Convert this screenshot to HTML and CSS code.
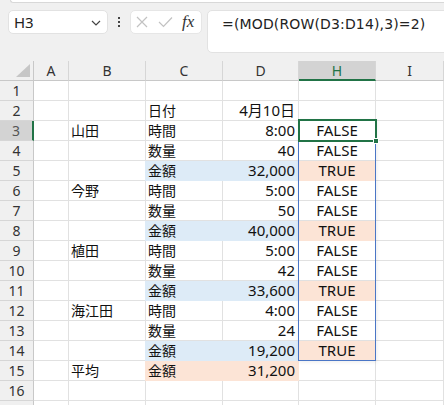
FILE: index.html
```html
<!DOCTYPE html>
<html lang="ja">
<head>
<meta charset="utf-8">
<link rel="stylesheet" href="styles.css">
</head>
<body>
<div class="ribbon-edge"></div>
<div class="fbar">
  <div class="namebox">
    <span>H3</span>
    <svg class="chev" width="10" height="6" viewBox="0 0 10 6"><polyline points="1,1 5,5 9,1" fill="none" stroke="#444" stroke-width="1.2"/></svg>
  </div>
  <div class="vdots"><i></i><i></i><i></i></div>
  <div class="fxbox">
    <svg width="12" height="12" viewBox="0 0 12 12"><path d="M1 1 L11 11 M11 1 L1 11" stroke="#c2c2c2" stroke-width="1.2" fill="none"/></svg>
    <svg width="15" height="12" viewBox="0 0 15 12"><polyline points="1,6 5.5,10.5 14,1.5" stroke="#c2c2c2" stroke-width="1.2" fill="none"/></svg>
    <span class="fx">fx</span>
  </div>
  <div class="formula">=(MOD(ROW(D3:D14),3)=2)</div>
</div>
<div class="sheet">
  <div class="grid">
    <div class="c hd corner"><svg width="15" height="14" viewBox="0 0 15 14"><polygon points="14,0 14,13 0,13" fill="#c6c6c6"/></svg></div>
    <div class="c hd">A</div><div class="c hd">B</div><div class="c hd">C</div><div class="c hd">D</div><div class="c hd hsel">H</div><div class="c hd">I</div>

    <div class="c rh">1</div><div class="c"></div><div class="c"></div><div class="c"></div><div class="c"></div><div class="c"></div><div class="c"></div>
    <div class="c rh">2</div><div class="c"></div><div class="c"></div><div class="c jp">日付</div><div class="c r">4月10日</div><div class="c"></div><div class="c"></div>
    <div class="c rh rsel">3</div><div class="c"></div><div class="c jp">山田</div><div class="c jp">時間</div><div class="c r">8:00</div><div class="c m">FALSE</div><div class="c"></div>
    <div class="c rh">4</div><div class="c"></div><div class="c"></div><div class="c jp">数量</div><div class="c r">40</div><div class="c m">FALSE</div><div class="c"></div>
    <div class="c rh">5</div><div class="c"></div><div class="c"></div><div class="c jp blue bl">金額</div><div class="c r blue">32,000</div><div class="c m org">TRUE</div><div class="c"></div>
    <div class="c rh">6</div><div class="c"></div><div class="c jp">今野</div><div class="c jp">時間</div><div class="c r">5:00</div><div class="c m">FALSE</div><div class="c"></div>
    <div class="c rh">7</div><div class="c"></div><div class="c"></div><div class="c jp">数量</div><div class="c r">50</div><div class="c m">FALSE</div><div class="c"></div>
    <div class="c rh">8</div><div class="c"></div><div class="c"></div><div class="c jp blue bl">金額</div><div class="c r blue">40,000</div><div class="c m org">TRUE</div><div class="c"></div>
    <div class="c rh">9</div><div class="c"></div><div class="c jp">植田</div><div class="c jp">時間</div><div class="c r">5:00</div><div class="c m">FALSE</div><div class="c"></div>
    <div class="c rh">10</div><div class="c"></div><div class="c"></div><div class="c jp">数量</div><div class="c r">42</div><div class="c m">FALSE</div><div class="c"></div>
    <div class="c rh">11</div><div class="c"></div><div class="c"></div><div class="c jp blue bl">金額</div><div class="c r blue">33,600</div><div class="c m org">TRUE</div><div class="c"></div>
    <div class="c rh">12</div><div class="c"></div><div class="c jp">海江田</div><div class="c jp">時間</div><div class="c r">4:00</div><div class="c m">FALSE</div><div class="c"></div>
    <div class="c rh">13</div><div class="c"></div><div class="c"></div><div class="c jp">数量</div><div class="c r">24</div><div class="c m">FALSE</div><div class="c"></div>
    <div class="c rh">14</div><div class="c"></div><div class="c"></div><div class="c jp blue bl">金額</div><div class="c r blue">19,200</div><div class="c m org">TRUE</div><div class="c"></div>
    <div class="c rh">15</div><div class="c"></div><div class="c jp">平均</div><div class="c jp org bl">金額</div><div class="c r org">31,200</div><div class="c"></div><div class="c"></div>
    <div class="c rh">16</div><div class="c"></div><div class="c"></div><div class="c"></div><div class="c"></div><div class="c"></div><div class="c"></div>
    <div class="c rh"></div><div class="c"></div><div class="c"></div><div class="c"></div><div class="c"></div><div class="c"></div><div class="c"></div>
  </div>
  <div class="range"></div>
  <div class="active"></div>
  <div class="handle"></div>
</div>
</body>
</html>
```

FILE: styles.css
```css
html, body {
  margin: 0;
  padding: 0;
  background: #f0f0f0;
  width: 444px;
  height: 405px;
  overflow: hidden;
  font-family: "Noto Sans", "Noto Sans CJK JP", sans-serif;
}

.ribbon-edge {
  margin-left: 10px;
  height: 2px;
  background: #ffffff;
  border: 1px solid #d8d8d8;
  border-top: none;
  border-right: none;
  border-radius: 0 0 0 6px;
}

.fbar {
  display: flex;
  align-items: flex-start;
  margin-top: 7px;
  padding-left: 8px;
  height: 43px;
}

.namebox {
  box-sizing: border-box;
  width: 100px;
  height: 24px;
  background: #fff;
  border: 1px solid #e2e2e2;
  border-radius: 5px;
  display: flex;
  align-items: center;
  justify-content: space-between;
  padding: 0 6px 0 5px;
  font-size: 15px;
  color: #222;
}

.chev { margin-top: 1px; }

.vdots {
  width: 22px;
  height: 24px;
  display: flex;
  flex-direction: column;
  align-items: center;
  justify-content: center;
  gap: 2px;
}
.vdots i {
  display: block;
  width: 2px;
  height: 2px;
  background: #444;
}

.fxbox {
  box-sizing: border-box;
  width: 72px;
  height: 24px;
  background: #fff;
  border: 1px solid #e6e6e6;
  border-radius: 5px;
  display: flex;
  align-items: center;
  gap: 10px;
  padding-left: 5px;
}
.fx {
  font-family: "Liberation Serif", serif;
  font-style: italic;
  font-size: 17px;
  color: #333;
  margin-left: -1px;
}

.formula {
  box-sizing: border-box;
  flex: 1;
  margin-left: 5px;
  margin-right: -10px;
  height: 43px;
  background: #fff;
  border: 1px solid #e2e2e2;
  border-radius: 5px;
  padding: 3px 0 0 14px;
  font-family: "DejaVu Sans", sans-serif;
  font-size: 14px;
  line-height: 20px;
  color: #222;
  letter-spacing: 0.15px;
}

.sheet {
  position: relative;
  margin-top: 8px;
}

.grid {
  display: grid;
  grid-template-columns: 34px 35px 77px 77px 76px 77px 68px;
  grid-auto-rows: 20px;
  background: #fff;
}

.c {
  box-sizing: border-box;
  border-right: 1px solid #e1e1e1;
  border-bottom: 1px solid #e1e1e1;
  font-size: 15px;
  line-height: 19px;
  padding: 0 3px;
  white-space: nowrap;
  color: #111;
}
.c.jp { font-size: 14px; padding-left: 2px; }
.c.r { text-align: right; }
.c.m { text-align: center; }

.c.blue { background: #ddebf7; border-color: #ddebf7; }
.c.org { background: #fce4d6; border-color: #fce4d6; }
.c.blue.bl { box-shadow: -1px 0 0 #ddebf7; }
.c.org.bl { box-shadow: -1px 0 0 #fce4d6; }

.c.hd {
  background: #f0f0f0;
  border-right-color: #d6d6d6;
  border-bottom-color: #c8c8c8;
  text-align: center;
  font-size: 14px;
  color: #333;
}
.c.corner {
  display: flex;
  align-items: flex-end;
  justify-content: flex-end;
  padding: 0 2px 2px 0;
  border-right-color: #c8c8c8;
}
.c.hsel {
  background: #d3d3d3;
  color: #217346;
  border-bottom: 2px solid #217346;
}

.c.rh {
  background: #f0f0f0;
  border-right-color: #c8c8c8;
  border-bottom-color: #d6d6d6;
  text-align: center;
  font-size: 14px;
  color: #333;
  padding: 0;
}
.c.rsel {
  background: #d3d3d3;
  color: #555;
  border-right: 2px solid #217346;
}

.range {
  position: absolute;
  left: 298px;
  top: 59px;
  width: 78px;
  height: 241px;
  box-sizing: border-box;
  border: 1px solid #4a76c6;
  box-shadow: 1px 1px 4px rgba(0,0,0,0.08);
}
.active {
  position: absolute;
  left: 298px;
  top: 58px;
  width: 79px;
  height: 23px;
  box-sizing: border-box;
  border: 2px solid #217346;
}
.handle {
  position: absolute;
  left: 373px;
  top: 77px;
  width: 6px;
  height: 6px;
  box-sizing: border-box;
  background: #217346;
  border: 1px solid #fff;
}
```
